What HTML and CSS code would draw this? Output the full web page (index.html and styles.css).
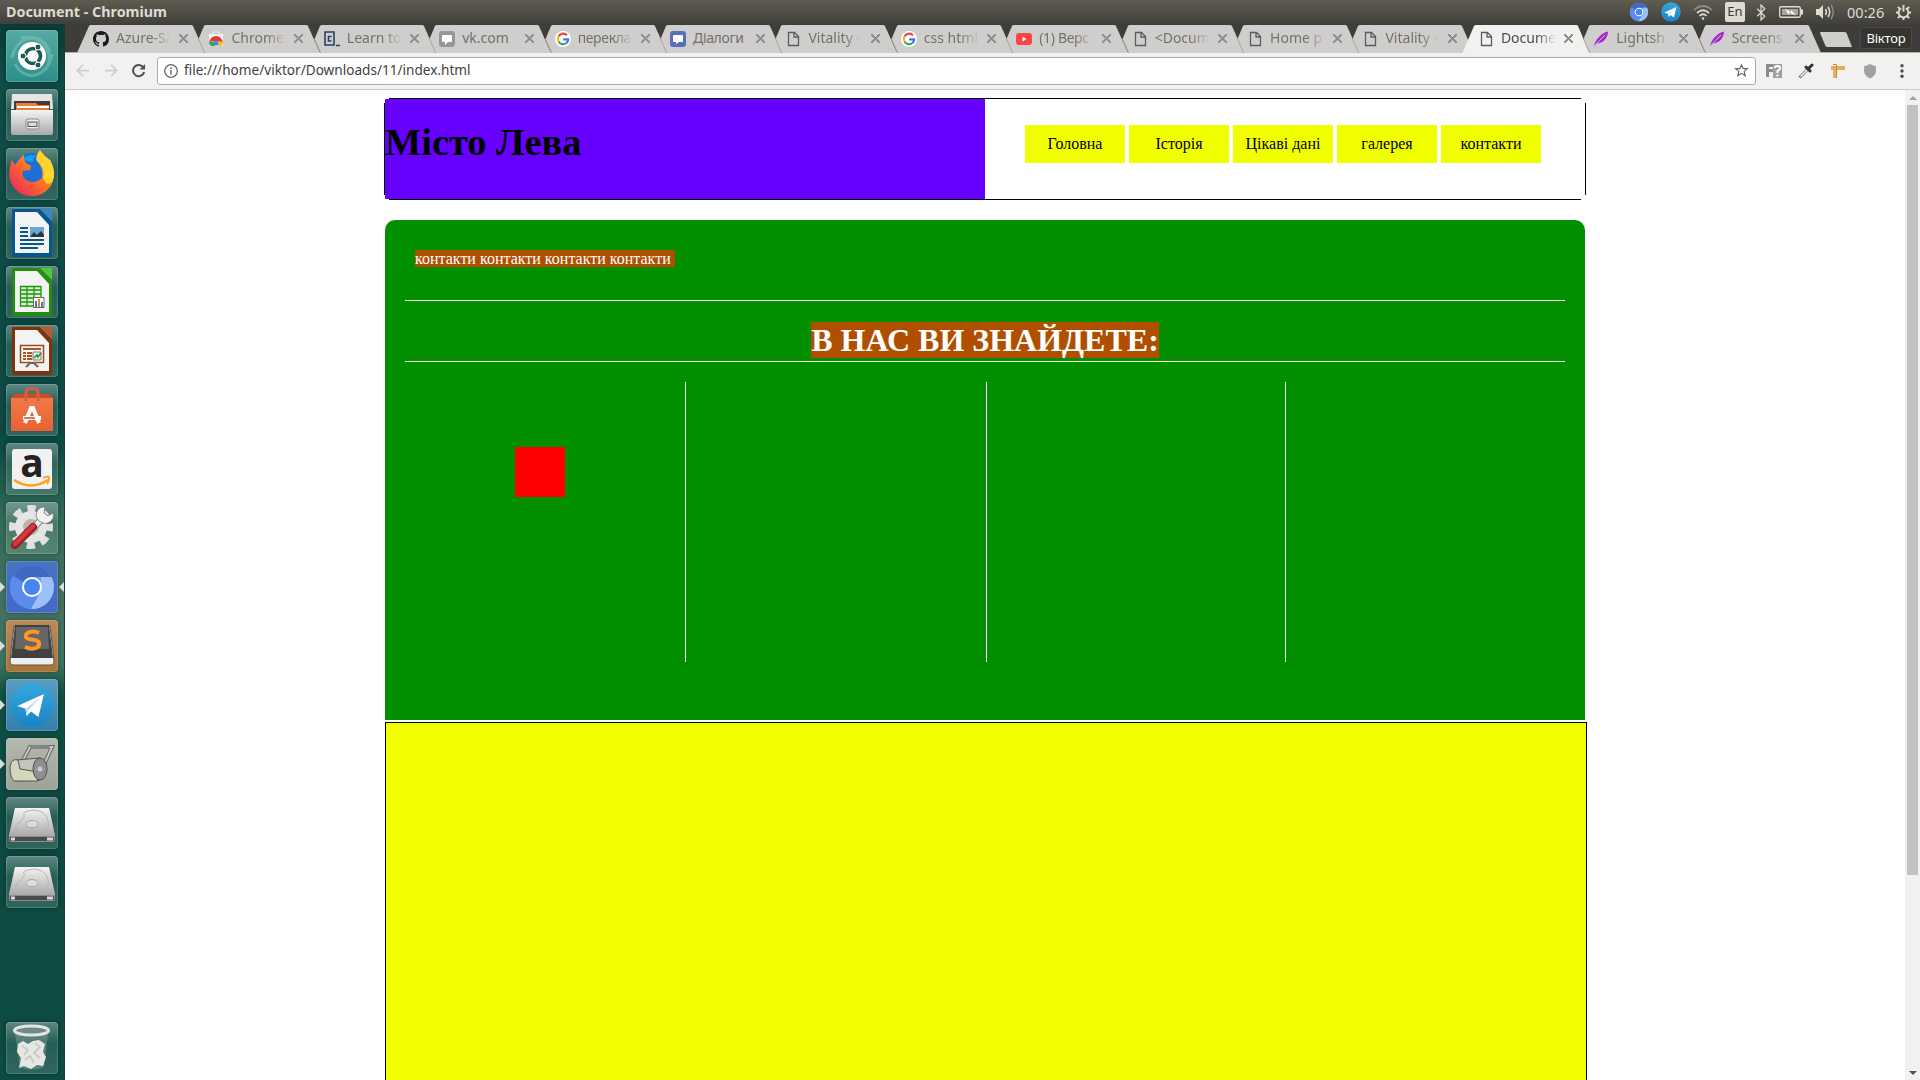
FILE: index.html
```html
<!DOCTYPE html>
<html lang="uk">
<head>
<meta charset="utf-8">
<title>Document - Chromium</title>
<link rel="stylesheet" href="styles.css">
</head>
<body>
<svg class="defs" aria-hidden="true">
  <defs>
    <linearGradient id="steel" x1="0" y1="0" x2="0" y2="1"><stop offset="0" stop-color="#f4f4f4"/><stop offset="1" stop-color="#a9a9a9"/></linearGradient>
    <linearGradient id="fox" x1="1" y1="0" x2="0" y2="1"><stop offset="0" stop-color="#ffd93b"/><stop offset=".45" stop-color="#ff7a1f"/><stop offset="1" stop-color="#e8196b"/></linearGradient>
    <linearGradient id="bag" x1="0" y1="0" x2="0" y2="1"><stop offset="0" stop-color="#f07a4a"/><stop offset="1" stop-color="#ea6230"/></linearGradient>
    <linearGradient id="tg" x1="0" y1="0" x2="0" y2="1"><stop offset="0" stop-color="#35a8e0"/><stop offset="1" stop-color="#1a84c4"/></linearGradient>
    <symbol id="tab-first" viewBox="0 0 128 28" preserveAspectRatio="none"><path d="M0 28 12 1Q12.500 0 14 0H114Q115.500 0 116 1L128 28Z" fill="#d0cecc"/></symbol>
    <symbol id="tab" viewBox="0 0 128 28" preserveAspectRatio="none"><path d="M6.500 14 12 1Q12.500 0 14 0H114Q115.500 0 116 1L128 28H12.700Z" fill="#d0cecc"/><path d="M6.500 14 12.700 28" stroke="#aaa8a5"/></symbol>
    <symbol id="tab-active" viewBox="0 0 128 28" preserveAspectRatio="none"><path d="M0 28 12 1Q12.500 0 14 0H114Q115.500 0 116 1L128 28Z" fill="#f2f1ef"/></symbol>
    <symbol id="page" viewBox="0 0 16 16"><path d="M3.500 1.500H9.500L13.500 5.500V14.500H3.500ZM9 1.500V6H13.500" fill="none" stroke="#5c5c5c" stroke-width="1.300"/></symbol>
    <symbol id="google" viewBox="0 0 16 16"><circle cx="8" cy="8" r="8" fill="#fff"/><g fill="none" stroke-width="2.100"><path d="M12 4.300A5.300 5.300 0 0 0 3.500 5.500" stroke="#ea4335"/><path d="M3.500 5.500A5.300 5.300 0 0 0 3.500 10.500" stroke="#fbbc05"/><path d="M3.500 10.500A5.300 5.300 0 0 0 11.500 12" stroke="#34a853"/><path d="M11.500 12A5 5 0 0 0 13.200 8.400H8.200" stroke="#4c6cf5"/></g></symbol>
    <symbol id="feather" viewBox="0 0 16 16"><path d="M1 15.500C2 9 8 2 15 .5 15 6 11 12 4 12.500Z" fill="#a32cc4"/><path d="M1 15.500Q7 9 12 4" stroke="#e6b8ef" stroke-width="1" fill="none"/></symbol>
    <symbol id="chromium" viewBox="0 0 48 48"><circle cx="24" cy="24" r="22" fill="#6c9cf2"/><path d="M24 24 5 13A22 22 0 0 1 43.500 14H24Z" fill="#4169c4"/><path d="M24 24 5 13A22 22 0 0 0 23 46L33 28Z" fill="#5b8ced"/><path d="M43.500 14A22 22 0 0 1 23 46L33 28 33 14Z" fill="#9dbff8"/><circle cx="24" cy="24" r="10" fill="#fff"/><circle cx="24" cy="24" r="8" fill="#4686f2"/></symbol>
    <symbol id="telegram" viewBox="0 0 48 48"><circle cx="24" cy="24" r="23.500" fill="url(#tg)"/><path d="M8 25 37 12 31 37 23 31 18 36 17 28Z" fill="#fff"/><path d="M17 28 34 15 20 30 18 36Z" fill="#c5dcec"/></symbol>
    <symbol id="drive" viewBox="0 0 52 52"><path d="M9 11H43L49 38V43Q49 45 47 45H5Q3 45 3 43V38Z" fill="#8d8d8d"/><path d="M9 11H43L49 39H3Z" fill="url(#steel)"/><path d="M4 40H48V44H4Z" fill="#4b4b4b"/><path d="M5 40.500H9V43.500H5ZM41 40.500H47V43.500H41Z" fill="#d8d8d8"/><path d="M22 14C38 10 44 22 42 30 36 38 16 38 10 32 8 27 16 25 18 20 19 17 15 16 22 14Z" fill="none" stroke="#b5b5b5"/><ellipse cx="26" cy="27" rx="6" ry="3.500" fill="#ddd" stroke="#aaa"/></symbol>
  </defs>
</svg>

<header class="panel">
  <div class="panel-title">Document - Chromium</div>
  <div class="indicators">
    <svg class="i20" viewBox="0 0 48 48"><use href="#chromium"/></svg>
    <svg class="i20" viewBox="0 0 48 48"><use href="#telegram"/></svg>
    <svg class="i20" viewBox="0 0 20 20" fill="none" stroke="#dfdbd2" stroke-width="1.700"><path d="M1 8Q10 0 19 8" stroke="#8c8a83"/><path d="M4 11Q10 5.500 16 11M6.500 14Q10 10.500 13.500 14"/><circle cx="10" cy="16.500" r="1.200" fill="#dfdbd2" stroke="none"/></svg>
    <span class="lang">En</span>
    <svg class="bt" viewBox="0 0 10 18" fill="none" stroke="#dfdbd2" stroke-width="1.300"><path d="M1 5 9 13 5 17V1L9 5 1 13"/></svg>
    <svg class="bat" viewBox="0 0 24 14"><rect x=".7" y="1.700" width="20.600" height="10.600" rx="1.500" fill="none" stroke="#dfdbd2" stroke-width="1.400"/><path d="M22 4.500H24V9.500H22Z" fill="#dfdbd2"/><path d="M3 4H19V10H3Z" fill="#aaa79e"/><path d="M6 3.500 12 7.500 12 5 17 10.500 10 7.500V10Z" fill="#fff"/></svg>
    <svg class="i20" viewBox="0 0 20 20"><path d="M1 7H4L8 3V17L4 13H1Z" fill="#dfdbd2"/><g fill="none" stroke="#dfdbd2" stroke-width="1.500"><path d="M10.500 7Q12.500 10 10.500 13M13 5Q16.500 10 13 15"/><path d="M16 3Q20.500 10 16 17" stroke="#8c8a83"/></g></svg>
    <span class="clock">00:26</span>
    <svg class="gear" viewBox="0 0 18 18" fill="none" stroke="#dfdbd2"><path d="M6.500 4.500A5.200 5.200 0 1 0 11.500 4.500" stroke-width="2"/><path d="M9 1V8" stroke-width="2"/><path d="M3 3 5 5M15 3 13 5M1 9H4M14 9H17M3 15 5 13M15 15 13 13M9 14V17" stroke-width="2"/></svg>
  </div>
</header>

<div class="desktop">
  <nav class="launcher">
    <div class="tile dash"><svg viewBox="0 0 52 52"><path d="M6 28C10 5 36 0 44 22M46 24C43 46 20 54 9 34M15 8C35 3 50 22 40 39" fill="none" stroke="#8accc3" stroke-width="3" opacity=".45"/><circle cx="26" cy="26" r="14" fill="#fff"/><circle cx="27" cy="26" r="7.500" fill="none" stroke="#1f5a55" stroke-width="3.500" stroke-dasharray="14.200 1.500" stroke-dashoffset="-8"/><g fill="#1f5a55" stroke="#fff"><circle cx="17" cy="26" r="3"/><circle cx="32" cy="17" r="3"/><circle cx="32" cy="35" r="3"/></g></svg></div>
    <div class="tile"><svg viewBox="0 0 52 52"><path d="M6 5H46L47 20H5Z" fill="#e5e5e5"/><path d="M8 12H44V22H8Z" fill="#453b36"/><path d="M10 14H30L32 16H43V23H10Z" fill="#e97e38"/><path d="M11 17H43V19H11Z" fill="#fff"/><path d="M5 21H47V44Q47 46 45 46H7Q5 46 5 44Z" fill="url(#steel)"/><rect x="20" y="30" width="13" height="10" rx="2" fill="#ededed" stroke="#888"/><rect x="22" y="33" width="9" height="4.500" fill="#ddd" stroke="#555"/></svg></div>
    <div class="tile"><svg viewBox="0 0 52 52"><circle cx="26" cy="25" r="20" fill="#1d6fd6"/><path d="M16 12Q22 5 31 8 26 10 27 14Z" fill="#14a0f0"/><path d="M6 12 9 17Q14 10 18 6 17 11 20 15L25 18 24 22 17 23Q15 28 20 32 28 37 36 30 38 20 30 12 30 6 34 2 38 8 44 12 52 28 44 39 36 49 25 48 9 47 4 32 2 22 6 12Z" fill="url(#fox)"/><path d="M34 2Q37 8 44 12 51 24 46 34 41 39 37 30 40 19 31 13 31 6 34 2Z" fill="#ffd431"/></svg></div>
    <div class="tile"><svg viewBox="0 0 52 52"><path d="M6 2H34L46 15V48Q46 50 44 50H8Q6 50 6 48Z" fill="#075593"/><path d="M9 5H31L43 18V46H9Z" fill="#f3f3f3"/><path d="M34 2H46V14Z" fill="#3b87c4"/><path d="M14 21H22M14 25H22M14 29H22M14 33H38M14 37H38M14 41H32" stroke="#0b568f" stroke-width="2"/><path d="M24 20H38V30H24Z" fill="#65a9d6"/><path d="M24 30 28 25 31 28 35 24 38 28V30Z" fill="#333"/></svg></div>
    <div class="tile"><svg viewBox="0 0 52 52"><path d="M6 2H34L46 15V48Q46 50 44 50H8Q6 50 6 48Z" fill="#238c13"/><path d="M9 5H31L43 18V46H9Z" fill="#f3f3f3"/><path d="M34 2H46V14Z" fill="#51c83c"/><path d="M14 20H35V40H14Z" fill="#d7f4cf"/><path d="M14.500 20.500H35V40H14.500ZM14 24H35M14 28H35M14 32H35M14 36H35M21 20V40M28 20V40" fill="none" stroke="#219413" stroke-width="1.300"/><path d="M27.500 31.500H38V41.500H27.500Z" fill="#fff" stroke="#666"/><path d="M29 35H31V41H29ZM35 36H37V41H35Z" fill="#3682c4"/><path d="M32 33H34V41H32Z" fill="#f18618"/></svg></div>
    <div class="tile"><svg viewBox="0 0 52 52"><path d="M6 2H34L46 15V48Q46 50 44 50H8Q6 50 6 48Z" fill="#80330b"/><path d="M9 5H31L43 18V46H9Z" fill="#f3f3f3"/><path d="M34 2H46V14Z" fill="#ba5a2d"/><path d="M14.500 20.500H37.500V37.500H14.500Z" fill="#fff" stroke="#a14415" stroke-width="1.500"/><path d="M17 24H35M17 28H20M17 31H20M17 34H20M21 28H26M21 31H26M21 34H26" stroke="#b55020" stroke-width="2"/><path d="M27 27H35V35H27Z" fill="#e8f5e5" stroke="#777"/><path d="M28 33 31 30 32 32 35 28" fill="none" stroke="#22922a" stroke-width="1.500"/><path d="M20 42 24 38H28L32 42" fill="none" stroke="#666" stroke-width="2"/></svg></div>
    <div class="tile"><svg viewBox="0 0 52 52"><path d="M5 14 9 10H43L47 14Z" fill="#c84f25"/><path d="M5 14H47V47H5Z" fill="url(#bag)"/><path d="M20 17V8Q20 5 23 5H29Q32 5 32 8V17" fill="none" stroke="#d95d36" stroke-width="3"/><path d="M19 39 25 24H27L33 39M17 34H35" fill="none" stroke="#fff" stroke-width="4"/><path d="M18 34H29" stroke="#d65022" stroke-width="1.500"/></svg></div>
    <div class="tile"><svg viewBox="0 0 52 52"><rect x="6" y="6" width="40" height="40" rx="3" fill="#f1f1f1"/><text class="amazon" x="26" y="34" text-anchor="middle">a</text><path d="M8 37Q25 48 42 37" fill="none" stroke="#ff9d16" stroke-width="2.500"/><path d="M37 35Q44 32 43 36 43 39 41 41" fill="none" stroke="#ff9d16" stroke-width="1.800"/></svg></div>
    <div class="tile"><svg viewBox="0 0 52 52"><circle cx="25" cy="25" r="18" fill="none" stroke="#e0e0e0" stroke-width="8" stroke-dasharray="8 6.140" stroke-dashoffset="4"/><circle cx="25" cy="25" r="12" fill="#b5b5b5" stroke="#e5e5e5" stroke-width="8"/><path d="M20 33 37 16" stroke="#8a8a8a" stroke-width="7"/><path d="M20 33 37 16" stroke="#ececec" stroke-width="5"/><path d="M33 19A8 8 0 0 1 39 5L38 11 42 14 47 11A8 8 0 0 1 35 20Z" fill="#f2f2f2" stroke="#777" stroke-width=".8"/><path d="M9 43 27 25" stroke="#9e1e24" stroke-width="8" stroke-linecap="round"/><path d="M9 42 27 24" stroke="#d23a40" stroke-width="4.500" stroke-linecap="round"/></svg></div>
    <div class="tile blue focused"><svg viewBox="0 0 52 52"><use href="#chromium" x="2" y="2" width="48" height="48"/></svg></div>
    <div class="tile orange running"><svg viewBox="0 0 52 52"><path d="M8 6H44L48 40Q48 45 45 45H7Q4 45 4 40Z" fill="#eee" stroke="#555"/><path d="M9 5H43L47 38H5Z" fill="#414141"/><path d="M10 7H42L43 29H9Z" fill="#666"/><path d="M33 13C27 10 19 12 20 17 21 21 32 18 33 23 34 29 25 30 19 27" fill="none" stroke="#ff962b" stroke-width="4"/></svg></div>
    <div class="tile sky running"><svg viewBox="0 0 52 52"><use href="#telegram" x="4" y="4" width="44" height="44"/></svg></div>
    <div class="tile grey running"><svg viewBox="0 0 52 52"><path d="M16 24 24 9H46L37 29" fill="none" stroke="#666" stroke-width="4"/><path d="M16 24 24 9H46L37 29" fill="none" stroke="#c7c7c7" stroke-width="2"/><path d="M26 9H42" stroke="#858585" stroke-width="4" stroke-linecap="round"/><path d="M10 22 34 20V42L12 43Z" fill="#c4c4bc" stroke="#555"/><path d="M4 29Q5 20 12 22L14 31 32 34Q29 39 32 43L8 43Q4 39 4 29Z" fill="#d5d7bb" stroke="#555"/><ellipse cx="34" cy="31" rx="7" ry="11" fill="#909090" stroke="#4f4f4f"/><circle cx="34" cy="31" r="2.500" fill="#ccc"/></svg></div>
    <div class="tile"><svg viewBox="0 0 52 52"><use href="#drive"/></svg></div>
    <div class="tile"><svg viewBox="0 0 52 52"><use href="#drive"/></svg></div>
    <div class="tile trash"><svg viewBox="0 0 52 52"><path d="M9 12H42L38 45Q26 50 14 45Z" fill="#9fb7b2" opacity=".35"/><path d="M12 22 17 19 22 22 27 19 33 18 39 22 37 30 40 35 37 44 31 43 25 47 18 44 13 46 15 36 11 30Z" fill="#e6e6e2"/><path d="M16 24 22 28 18 33M29 21 34 25 28 31 34 36M19 38 24 34 28 41" fill="none" stroke="#c4c4be" stroke-width="1.500"/><ellipse cx="25.500" cy="8.500" rx="17" ry="4.500" fill="#6f8984" stroke="#e4e4e4" stroke-width="3"/></svg></div>
  </nav>

  <main class="browser">
    <div class="tabstrip">
      <div class="tab"><svg class="shape"><use href="#tab-first"/></svg><svg class="fav" viewBox="0 0 16 16"><path fill="#1b1b1b" d="M8 0C3.580 0 0 3.580 0 8c0 3.540 2.290 6.530 5.470 7.590.4.070.55-.17.55-.38v-1.490c-2.010.37-2.530-.49-2.690-.94-.09-.23-.48-.94-.82-1.130-.28-.15-.68-.52-.01-.53.63-.01 1.080.58 1.230.82.72 1.210 1.870.87 2.330.66.070-.52.28-.87.51-1.070-1.780-.2-3.640-.89-3.640-3.950 0-.87.310-1.590.82-2.150-.08-.2-.36-1.020.08-2.120 0 0 .67-.21 2.200.82a7.400 7.400 0 0 1 4 0c1.530-1.040 2.200-.82 2.200-.82.44 1.100.16 1.920.08 2.120.51.56.82 1.270.82 2.150 0 3.070-1.870 3.750-3.650 3.950.29.25.54.73.54 1.480v2.200c0 .21.150.46.55.38A8 8 0 0 0 16 8c0-4.420-3.580-8-8-8Z"/></svg><span class="label">Azure-Sa</span><i class="x"></i></div>
      <div class="tab"><svg class="shape"><use href="#tab"/></svg><svg class="fav" viewBox="0 0 16 16"><path d="M1 3H15V15H1Z" fill="#f4f4f4"/><path d="M5 3V1H11V3" fill="none" stroke="#eee"/><path d="M1 11Q3 5 8 5 13 5 15 11L8 10Z" fill="#e33b2e"/><path d="M1 11Q1 14 3 15H7L6 11Z" fill="#35a853"/><path d="M10 11 15 11Q15 14 13 15H9Z" fill="#fbc116"/><circle cx="8" cy="12" r="2.500" fill="#4285f4"/></svg><span class="label">Chrome</span><i class="x"></i></div>
      <div class="tab"><svg class="shape"><use href="#tab"/></svg><svg class="fav" viewBox="0 0 16 16" fill="none" stroke="#2b4062" stroke-width="1.600"><path d="M1 1H10V14H1ZM12 14.500H16M7.500 5.500H4.500V10H7.500"/></svg><span class="label">Learn to</span><i class="x"></i></div>
      <div class="tab"><svg class="shape"><use href="#tab"/></svg><svg class="fav" viewBox="0 0 16 16"><rect width="16" height="16" rx="3" fill="#979797"/><path d="M4 4H12Q13 4 13 5V10Q13 11 12 11H9L6 14V11H4Q3 11 3 10V5Q3 4 4 4Z" fill="#fff"/></svg><span class="label whole">vk.com</span><i class="x"></i></div>
      <div class="tab"><svg class="shape"><use href="#tab"/></svg><svg class="fav"><use href="#google"/></svg><span class="label tight">перекла</span><i class="x"></i></div>
      <div class="tab"><svg class="shape"><use href="#tab"/></svg><svg class="fav" viewBox="0 0 16 16"><rect width="16" height="16" rx="3" fill="#5b70bc"/><path d="M4 4H12Q13 4 13 5V10Q13 11 12 11H9L6 13V11H4Q3 11 3 10V5Q3 4 4 4Z" fill="#fff"/></svg><span class="label whole tight">Діалоги</span><i class="x"></i></div>
      <div class="tab"><svg class="shape"><use href="#tab"/></svg><svg class="fav"><use href="#page"/></svg><span class="label">Vitality -</span><i class="x"></i></div>
      <div class="tab"><svg class="shape"><use href="#tab"/></svg><svg class="fav"><use href="#google"/></svg><span class="label">css html</span><i class="x"></i></div>
      <div class="tab"><svg class="shape"><use href="#tab"/></svg><svg class="fav" viewBox="0 0 16 16"><rect y="2" width="16" height="12" rx="3" fill="#f44"/><path d="M6.500 5.500 10.500 8 6.500 10.500Z" fill="#fff"/></svg><span class="label tight">(1) Верс</span><i class="x"></i></div>
      <div class="tab"><svg class="shape"><use href="#tab"/></svg><svg class="fav"><use href="#page"/></svg><span class="label">&lt;Docum</span><i class="x"></i></div>
      <div class="tab"><svg class="shape"><use href="#tab"/></svg><svg class="fav"><use href="#page"/></svg><span class="label">Home p</span><i class="x"></i></div>
      <div class="tab"><svg class="shape"><use href="#tab"/></svg><svg class="fav"><use href="#page"/></svg><span class="label">Vitality -</span><i class="x"></i></div>
      <div class="tab active"><svg class="shape"><use href="#tab-active"/></svg><svg class="fav"><use href="#page"/></svg><span class="label">Docume</span><i class="x"></i></div>
      <div class="tab"><svg class="shape"><use href="#tab"/></svg><svg class="fav"><use href="#feather"/></svg><span class="label">Lightsh</span><i class="x"></i></div>
      <div class="tab"><svg class="shape"><use href="#tab"/></svg><svg class="fav"><use href="#feather"/></svg><span class="label">Screens</span><i class="x"></i></div>
      <svg class="newtab" viewBox="0 0 32 15"><path d="M0 1Q0 0 1 0H24Q26 0 26.500 1L32 15H8Q6 15 5.500 14Z" fill="#d0cecc"/></svg>
      <div class="user">Віктор</div>
    </div>

    <div class="toolbar">
      <svg class="nav-icon back" viewBox="0 0 16 16" fill="none" stroke="#cfcecc" stroke-width="2"><path d="M15 8H2M8 1.500 1.500 8 8 14.500"/></svg>
      <svg class="nav-icon fwd" viewBox="0 0 16 16" fill="none" stroke="#cfcecc" stroke-width="2"><path d="M1 8H14M8 1.500 14.500 8 8 14.500"/></svg>
      <svg class="nav-icon" viewBox="0 0 16 16"><path d="M13 4.500A6 6 0 1 0 14 9.500" fill="none" stroke="#505050" stroke-width="2.200"/><path d="M15 1V7H9Z" fill="#505050"/></svg>
      <div class="omnibox">
        <svg class="info" viewBox="0 0 14 14"><circle cx="7" cy="7" r="6.300" fill="none" stroke="#6a6a6a" stroke-width="1.300"/><path d="M7 6V10.500M7 3.300V4.900" stroke="#6a6a6a" stroke-width="1.500"/></svg>
        <span class="url">file:///home/viktor/Downloads/11/index.html</span>
        <svg class="star" viewBox="0 0 16 16"><path d="M8 1.800 9.800 6H14.300L10.800 8.900 12 13.600 8 11 4 13.600 5.200 8.900 1.700 6H6.200Z" fill="none" stroke="#666" stroke-width="1.200"/></svg>
      </div>
      <div class="extensions">
        <svg viewBox="0 0 16 16"><path d="M0 1H8V4H3V6H7V9H3V14H0Z" fill="#8b8b8b"/><path d="M7 1H16V15H7Z" fill="#a0a0a0"/><path d="M9 5Q9 3 11.500 3 14 3 14 5 14 7 11.500 8V10M11.500 11.500V13.500" fill="none" stroke="#fff" stroke-width="2"/></svg>
        <svg viewBox="0 0 16 16"><path d="M1.500 14.500 10 6" stroke="#777" stroke-width="3"/><path d="M2.500 13.500 10 6" stroke="#fff" stroke-width="1.300"/><path d="M8 4 12 8M11 5 14 2" stroke="#333" stroke-width="3" stroke-linecap="round"/></svg>
        <svg viewBox="0 0 16 16"><path d="M1 3H15V7H7V15H3V7H1Z" fill="#e7ae5b"/><path d="M3 1.500H6.500V15" fill="none" stroke="#c98a38"/></svg>
        <svg viewBox="0 0 16 16"><path d="M8 1 14 3.500V8Q14 13 8 15.500 2 13 2 8V3.500Z" fill="#a1a1a1"/></svg>
        <svg viewBox="0 0 16 16" fill="#505050"><circle cx="8" cy="2.800" r="1.700"/><circle cx="8" cy="8" r="1.700"/><circle cx="8" cy="13.200" r="1.700"/></svg>
      </div>
    </div>

    <div class="viewport">
      <div class="page">
        <div class="header">
          <div class="logo"><h1>Місто Лева</h1></div>
          <ul class="menu"><li>Головна</li><li>Історія</li><li>Цікаві дані</li><li>галерея</li><li>контакти</li></ul>
        </div>
        <section class="content">
          <p class="intro"><span>контакти контакти контакти контакти&nbsp;</span></p>
          <h2><span>В НАС ВИ ЗНАЙДЕТЕ:</span></h2>
          <div class="columns"><div><div class="red"></div></div><div></div><div></div><div></div></div>
        </section>
        <section class="yellow"></section>
      </div>
      <div class="scrollbar"><i class="up"></i><div class="thumb"></div><i class="down"></i></div>
    </div>
  </main>
</div>
</body>
</html>
```
FILE: styles.css
```css
* { box-sizing: border-box; }
body { margin: 0; width: 1920px; height: 1080px; overflow: hidden; background: #fff; font-family: "Noto Sans", sans-serif; display: flex; flex-direction: column; }
svg { display: block; flex: none; }
.defs { position: absolute; width: 0; height: 0; }

/* top panel */
.panel { height: 24px; flex: none; display: flex; align-items: center; justify-content: space-between; padding: 0 8px 0 6px; background: linear-gradient(#5f5c50, #403f3a); color: #dfdbd2; }
.panel-title { font-weight: 700; font-size: 14.3px; line-height: 20px; padding-bottom: 1px; }
.indicators { display: flex; align-items: center; font-size: 15px; line-height: 20px; }
.i20 { width: 20px; height: 20px; margin-right: 12px; }
.i20:first-child { margin-left: 1px; }
.lang { width: 20px; height: 20px; border-radius: 2px; background: #dfdbd2; color: #3c3b37; font-size: 13px; line-height: 19px; text-align: center; margin-right: 11px; }
.bt { width: 10px; height: 17px; margin-right: 13px; }
.bat { width: 24px; height: 14px; margin-right: 12px; }
.clock { width: 36px; margin-right: 12px; padding-bottom: 1px; font-size: 14.6px; white-space: nowrap; }
.gear { width: 17px; height: 17px; }

.desktop { flex: 1; min-height: 0; display: flex; }

/* launcher */
.launcher { width: 65px; flex: none; display: flex; flex-direction: column; gap: 7px; padding: 6px 0 6px 6px; border-right: 1px solid #173b37; background: linear-gradient(#0b3b36 0, #0e4c45 50px, #0c4a43 420px, #2f6a58 490px, #43735f 570px, #3f7360 640px, #0f4f44 670px, #0c4a42 800px, #0d4b43 1056px); }
.tile { position: relative; width: 52px; height: 52px; flex: none; border-radius: 4px; background: linear-gradient(rgba(255,255,255,.34), rgba(255,255,255,.1) 40%, rgba(255,255,255,.15)); box-shadow: inset 0 0 0 1px rgba(255,255,255,.16), 0 0 4px rgba(0,0,0,.35); }
.tile > svg { width: 52px; height: 52px; }
.tile.dash { background: linear-gradient(#56aaa2, #2b8f87); }
.tile.blue { background: linear-gradient(#4773bf, #4269c4); }
.tile.orange { background: linear-gradient(#b98a5b, #aa7336); }
.tile.sky { background: linear-gradient(#5b9cc0, #337fae); }
.tile.grey { background: linear-gradient(#b4b8ad, #9da397); }
.tile.trash { margin-top: auto; }
.running::before, .focused::before, .focused::after { content: ""; position: absolute; top: 21px; left: -6px; border: 5px solid transparent; border-left-color: #dcdcdc; border-right-width: 0; }
.focused::after { left: auto; right: -6px; border-width: 5px 5px 5px 0; border-right-color: #dcdcdc; }
.amazon { font: 700 39px "Open Sans", sans-serif; fill: #222; }

/* browser */
.browser { flex: 1; min-width: 0; display: flex; flex-direction: column; }
.tabstrip { height: 29px; flex: none; display: flex; padding: 1px 8px 0 12px; background: #3e3d39; border-bottom: 1px solid #b0aeab; }
.tab { position: relative; flex: none; width: 128px; height: 28px; margin-right: -12.6px; display: flex; align-items: center; padding: 0 0 1px 16px; color: #73716e; font-size: 14px; line-height: 20px; }
.tab.active { color: #4c4c4c; margin-bottom: -1px; height: 29px; padding-bottom: 2px; }
.shape { position: absolute; left: 0; top: 0; width: 128px; height: 28px; }
.active .shape { height: 29px; }
.fav { position: relative; width: 16px; height: 16px; }
.label { position: relative; width: 55px; margin-left: 7px; padding-bottom: 1px; overflow: hidden; white-space: nowrap; -webkit-mask-image: linear-gradient(90deg, #000 65%, transparent); mask-image: linear-gradient(90deg, #000 65%, transparent); }
.label.tight { letter-spacing: -.35px; }
.label.whole { overflow: visible; -webkit-mask-image: none; mask-image: none; }
.x { position: relative; width: 9px; height: 9px; margin-left: 8px; background: linear-gradient(45deg, transparent 43%, #929190 43% 57%, transparent 57%), linear-gradient(-45deg, transparent 43%, #929190 43% 57%, transparent 57%); }
.newtab { width: 32px; height: 15px; margin: 7px 0 0 12px; }
.user { margin: 2px 0 0 auto; width: 52px; height: 22px; border: 1px solid #4a4945; border-radius: 3px; background: #353430; color: #fff; font-size: 13px; line-height: 20px; text-align: center; letter-spacing: -.2px; }
.toolbar { height: 37px; flex: none; display: flex; align-items: center; padding: 0 10px 1px 11px; background: #f2f1ef; border-bottom: 1px solid #cdcbc8; }
.nav-icon { width: 15px; height: 15px; margin-right: 11px; }
.nav-icon.back, .nav-icon.fwd { width: 14px; margin-right: 13.5px; }
.omnibox { width: 1599px; height: 28px; display: flex; align-items: center; padding: 0 6px; border: 1px solid #adaba8; border-radius: 3px; background: #fff; }
.info { width: 14px; height: 14px; }
.url { margin-left: 6px; padding-bottom: 1px; font-size: 13.6px; line-height: 20px; color: #3f3f3f; white-space: nowrap; }
.star { width: 15px; height: 15px; margin-left: auto; }
.extensions { margin-left: auto; display: flex; gap: 16px; }
.extensions svg { width: 16px; height: 16px; }

/* page */
.viewport { flex: 1; min-height: 0; display: flex; overflow: hidden; background: #fff; }
.page { flex: 1; overflow: hidden; padding-top: 8px; font-family: "Liberation Serif", serif; font-size: 16px; color: #000; }
/* frame lines stop short of the corners */
.header { width: 1202px; height: 102px; margin-left: 319px; padding: 1px; display: flex; background: linear-gradient(#000, #000) center top / 1192px 1px no-repeat, linear-gradient(#000, #000) center bottom / 1192px 1px no-repeat, linear-gradient(#000, #000) left center / 1px 92px no-repeat, linear-gradient(#000, #000) right center / 1px 92px no-repeat; }
.logo { width: 600px; background: #60f; }
.logo h1 { margin: 22px 0 0; font-size: 38.4px; line-height: 43px; white-space: nowrap; }
.menu { list-style: none; margin: 26px 0 0 40px; padding: 0; display: flex; gap: 4px; }
.menu li { width: 100px; height: 38px; line-height: 38px; text-align: center; background: #f1ff00; }
.content { width: 1200px; height: 500px; margin: 20px 0 0 320px; padding: 0 20px; border-radius: 10px 10px 0 0; background: #029001; color: #fff; }
.content span { background: #b04f00; }
.intro { height: 81px; margin: 0; padding: 30px 10px 0; border-bottom: 1px solid #fff; line-height: 18px; }
.content h2 { height: 61px; margin: 0; padding-top: 21px; border-bottom: 1px solid #fff; text-align: center; font-size: 32px; line-height: 37px; }
.columns { height: 280px; margin: 20px -20px 0; display: grid; grid-template-columns: 301px 301px 299px 299px; }
.columns > div + div { border-left: 1px solid #fff; margin-left: -1px; }
.red { width: 50px; height: 50px; margin: 65px 0 0 130px; background: red; }
.yellow { width: 1202px; height: 500px; margin: 2px 0 0 320px; border: 1px solid #000; background: #f1ff00; }
.scrollbar { width: 15px; flex: none; display: flex; flex-direction: column; align-items: center; background: #f1f1f1; }
.thumb { width: 11px; height: 770px; background: #c1c1c1; }
.up, .down { margin: 6px 0 5px; border: 4px solid transparent; border-top-width: 0; border-bottom-color: #a3a3a3; }
.down { margin: auto 0 5px; border-width: 4px 4px 0; border-top-color: #505050; }
```
